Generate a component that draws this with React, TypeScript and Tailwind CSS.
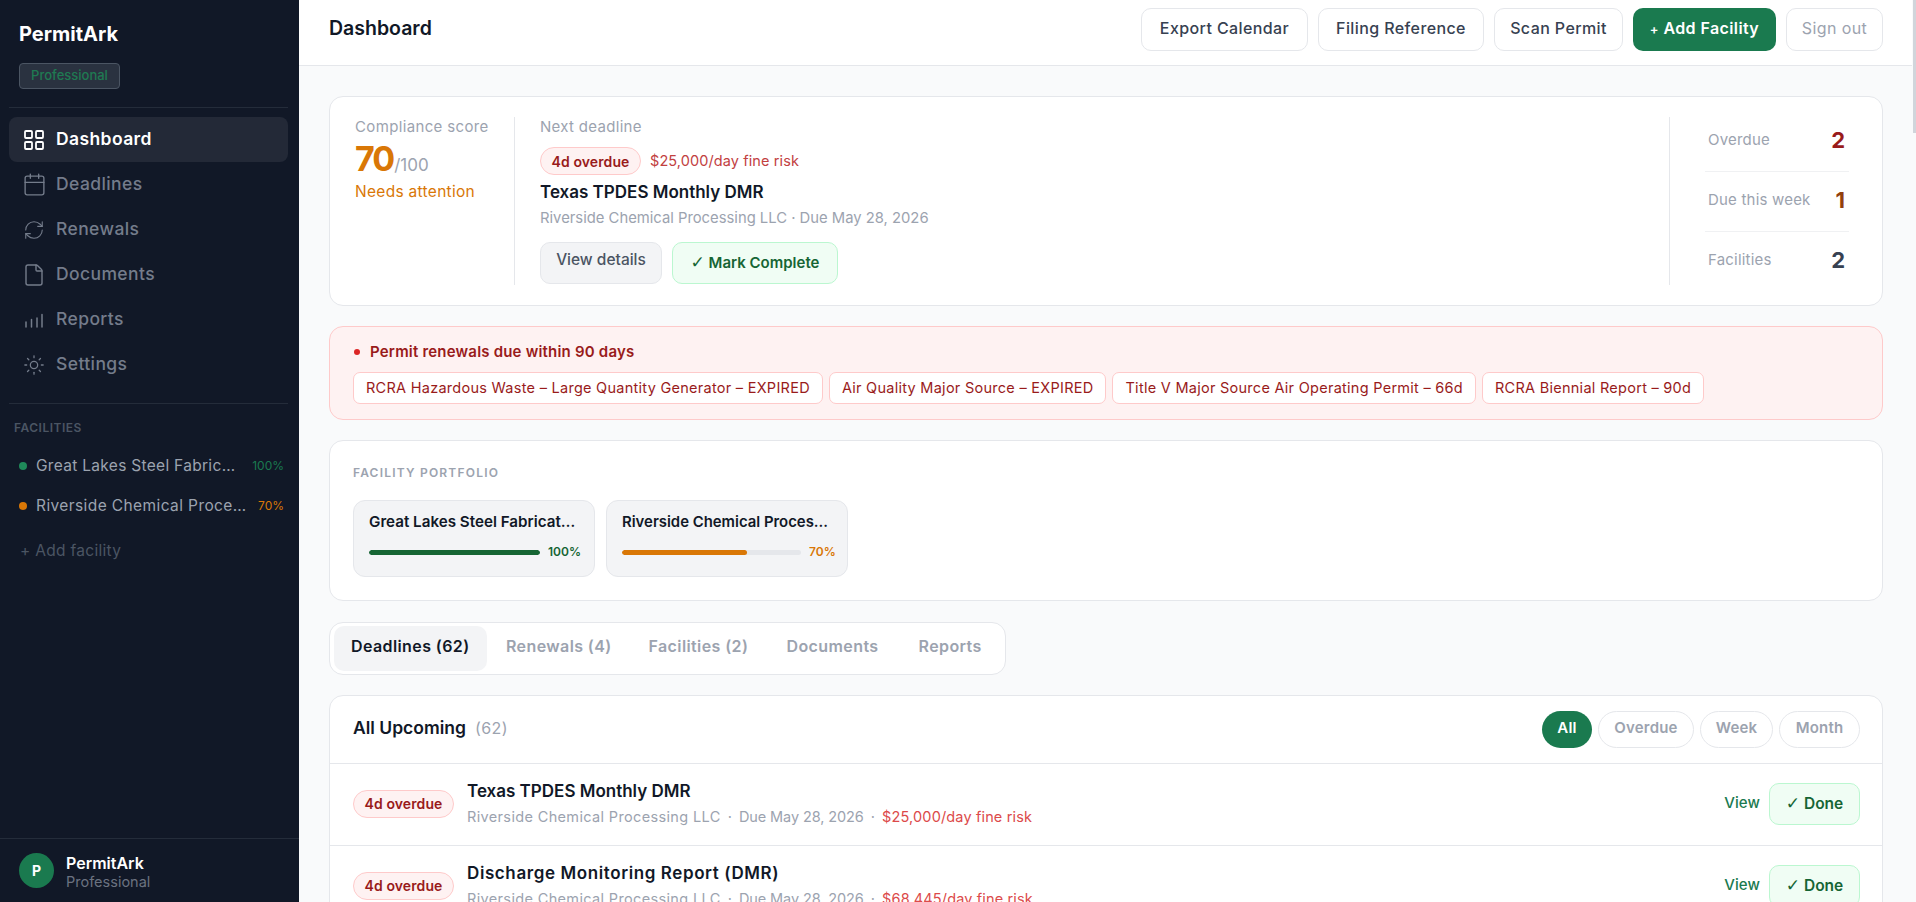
import React from 'react';
import { LayoutGrid, Calendar, RefreshCw, File, Sun } from 'lucide-react';

const font = { fontFamily: 'Inter, "Noto Sans", sans-serif' };

const ReportsIcon = () => (
  <svg width="20" height="20" viewBox="0 0 20 20" fill="none" stroke="currentColor" strokeWidth="1.5" strokeLinecap="round">
    <path d="M2 17v-5M7.5 17V9.5M13 17V8M18 17V4.5" />
  </svg>
);

const navItems = [
  { label: 'Dashboard', icon: <LayoutGrid size={24} strokeWidth={1.8} className="shrink-0" />, active: true },
  { label: 'Deadlines', icon: <Calendar size={25} strokeWidth={1.3} className="shrink-0" /> },
  { label: 'Renewals', icon: <RefreshCw size={22} strokeWidth={1.2} className="shrink-0" /> },
  { label: 'Documents', icon: <File size={24} strokeWidth={1.4} className="shrink-0" /> },
  { label: 'Reports', icon: <ReportsIcon /> },
  { label: 'Settings', icon: <Sun size={22} strokeWidth={1.4} className="shrink-0" /> },
];

const chips = [
  'RCRA Hazardous Waste – Large Quantity Generator – EXPIRED',
  'Air Quality Major Source – EXPIRED',
  'Title V Major Source Air Operating Permit – 66d',
  'RCRA Biennial Report – 90d',
];

const rows = [
  { title: 'Texas TPDES Monthly DMR', risk: '$25,000/day fine risk', titleClass: 'tracking-[0px]' },
  { title: 'Discharge Monitoring Report (DMR)', risk: '$68,445/day fine risk', titleClass: 'tracking-[0.6px]' },
];

const Check = () => <span className="font-['DejaVu_Sans'] text-[17px] font-normal leading-none">✓</span>;

const Overdue = () => (
  <span className="inline-flex h-[28px] w-[101px] shrink-0 items-center justify-center rounded-full border border-[#fecaca] bg-[#fef2f2] text-[14px] font-semibold tracking-[0.1px] text-[#991b1b]">
    4d overdue
  </span>
);

export default function App() {
  return (
    <div className="flex h-screen overflow-hidden bg-[#f9fafb]" style={font}>
      {/* Sidebar */}
      <aside className="flex w-[299px] shrink-0 flex-col bg-[#111827]">
        <div className="ml-[9px] mr-[11px] border-b border-[#242c3a] px-[10px] pb-[18px] pt-[21px]">
          <div className="text-[20px] font-bold leading-[26px] text-white">PermitArk</div>
          <span className="mt-[16px] flex h-[26px] w-[101px] items-center justify-center rounded border border-[#4b5563] bg-[#2a3240] text-[13px] font-medium text-[#1f7a52]">
            Professional
          </span>
        </div>
        <nav className="ml-[9px] mr-[11px] mt-[9px] border-b border-[#242c3a] pb-[16px]">
          {navItems.map((item) => (
            <div
              key={item.label}
              className={`flex h-[45px] items-center gap-[12px] rounded-lg px-[15px] text-[17.5px] tracking-[0.4px] ${
                item.active ? 'bg-[#232937] font-semibold text-white' : 'font-medium text-[#747c8b]'
              }`}
            >
              <span className="flex w-[20px] justify-center">{item.icon}</span>
              {item.label}
            </div>
          ))}
        </nav>
        <div className="px-[14px] pt-[16px] text-[12px] font-semibold leading-[16px] tracking-[0.5px] text-[#4b5563]">FACILITIES</div>
        <div className="mt-[10px] pl-[19px] pr-[15px]">
          <div className="flex h-[40px] items-center">
            <span className="h-[8px] w-[8px] shrink-0 rounded-full bg-[#1f8a5a]" />
            <span className="ml-[9px] w-[206px] truncate text-[15.5px] tracking-[0.3px] text-[#9ca3af]">Great Lakes Steel Fabrication</span>
            <span className="ml-auto text-[12px] text-[#1a7a4f]">100%</span>
          </div>
          <div className="flex h-[40px] items-center">
            <span className="h-[8px] w-[8px] shrink-0 rounded-full bg-[#d97706]" />
            <span className="ml-[9px] w-[214px] truncate text-[15.5px] tracking-[0.4px] text-[#9ca3af]">Riverside Chemical Processing LLC</span>
            <span className="ml-auto text-[12px] text-[#d97706]">70%</span>
          </div>
          <div className="mt-[5px] pl-[1px] text-[15.5px] leading-[40px] tracking-[0.3px] text-[#4b5563]">+ Add facility</div>
        </div>
        <div className="mt-auto flex h-[64px] items-center gap-[12px] border-t border-[#242c3a] px-[19px]">
          <span className="flex h-[35px] w-[35px] items-center justify-center rounded-full bg-[#1a7a4f] text-[14px] font-bold text-white">P</span>
          <div className="pt-[4px]">
            <div className="text-[16px] font-semibold leading-[19px] text-white">PermitArk</div>
            <div className="text-[14.5px] leading-[18px] text-[#6b7280]">Professional</div>
          </div>
        </div>
      </aside>

      {/* Main column */}
      <div className="min-w-0 flex-1 overflow-hidden">
        <header className="flex h-[66px] items-center justify-between border-b border-[#e5e7eb] bg-white pb-[6px] pl-[30px] pr-[29px]">
          <h1 className="pb-[2px] text-[19.5px] font-semibold text-[#111827]">Dashboard</h1>
          <div className="flex items-center gap-[10px] text-[16px] tracking-[0.4px]">
            <button className="h-[43px] w-[167px] rounded-[10px] border border-[#e5e7eb] bg-white pb-[3px] font-medium text-[#374151]">Export Calendar</button>
            <button className="h-[43px] w-[166px] rounded-[10px] border border-[#e5e7eb] bg-white pb-[3px] font-medium text-[#374151]">Filing Reference</button>
            <button className="h-[43px] w-[129px] rounded-[10px] border border-[#e5e7eb] bg-white pb-[3px] font-medium text-[#374151]">Scan Permit</button>
            <button className="h-[43px] w-[143px] rounded-[10px] bg-[#1a7a4f] pb-[3px] font-semibold text-white"><span className="text-[13px]">+</span> Add Facility</button>
            <button className="h-[43px] w-[97px] rounded-[10px] border border-[#e5e7eb] bg-white pb-[3px] text-[#9ca3af]">Sign out</button>
          </div>
        </header>

        <main className="flex flex-col pl-[30px] pr-[29px] pt-[30px]">
          {/* Score card */}
          <section className="flex h-[210px] rounded-[14px] border border-[#e5e7eb] bg-white px-[25px] py-[20px]">
            <div className="w-[160px] shrink-0 border-r border-[#e5e7eb]">
              <div className="text-[15px] leading-[20px] tracking-[0.35px] text-[#9ca3af]">Compliance score</div>
              <div className="mt-[1px] flex items-baseline">
                <span className="text-[34px] font-bold leading-[42px] tracking-[-2px] text-[#d97706]">70</span>
                <span className="ml-[1px] text-[17px] text-[#9ca3af]">/100</span>
              </div>
              <div className="mt-[2px] text-[15.5px] leading-[20px] tracking-[0.3px] text-[#d97706]">Needs attention</div>
            </div>
            <div className="flex-1 pl-[25px]">
              <div className="text-[15px] leading-[20px] tracking-[0.3px] text-[#9ca3af]">Next deadline</div>
              <div className="mt-[10px] flex items-center gap-[9px]">
                <Overdue />
                <span className="text-[14.5px] tracking-[0.1px] text-[#c2413f]">$25,000/day fine risk</span>
              </div>
              <div className="mt-[4px] text-[17px] font-semibold leading-[26px] text-[#111827]">Texas TPDES Monthly DMR</div>
              <div className="mt-[1px] text-[14.8px] leading-[24px] text-[#9ca3af]">Riverside Chemical Processing LLC · Due May 28, 2026</div>
              <div className="mt-[12px] flex items-start gap-[10px]">
                <button className="h-[42px] w-[122px] rounded-[10px] border border-[#e5e7eb] bg-[#f3f4f6] pb-[6px] text-[15.5px] font-medium text-[#4b5563]">View details</button>
                <button className="h-[42px] w-[166px] rounded-[10px] border border-[#bbf7d0] bg-[#f0fdf4] text-[15px] font-semibold text-[#166534]"><Check /> Mark Complete</button>
              </div>
            </div>
            <div className="w-[188px] shrink-0 border-l border-[#e5e7eb] pl-[35px] pr-[8px]">
              <div className="flex h-[55px] items-center justify-between border-b border-[#f0f1f3] pb-[8px] pl-[3px] pr-[4px]">
                <span className="text-[15px] tracking-[0.2px] text-[#9ca3af]">Overdue</span>
                <span className="text-[22px] font-bold text-[#991b1b]">2</span>
              </div>
              <div className="flex h-[60px] items-center justify-between border-b border-[#f0f1f3] pb-[2px] pl-[3px] pr-[4px]">
                <span className="text-[15px] tracking-[0.2px] text-[#9ca3af]">Due this week</span>
                <span className="text-[22px] font-bold text-[#92400e]">1</span>
              </div>
              <div className="flex h-[55px] items-center justify-between pl-[3px] pr-[4px] pt-[1px]">
                <span className="text-[15px] tracking-[0.2px] text-[#9ca3af]">Facilities</span>
                <span className="text-[22px] font-bold text-[#374151]">2</span>
              </div>
            </div>
          </section>

          {/* Renewal alert */}
          <section className="mt-[20px] h-[94px] rounded-[14px] border border-[#fecaca] bg-[#fef2f2] px-[23px] pt-[15px]">
            <div className="flex items-center gap-[10px] text-[15px] font-semibold leading-[20px] tracking-[0.2px] text-[#991b1b]">
              <span className="ml-[1px] h-[6px] w-[6px] rounded-full bg-[#dc2626]" />
              Permit renewals due within 90 days
            </div>
            <div className="mt-[10px] flex gap-[6px]">
              {chips.map((chip) => (
                <span key={chip} className="flex h-[32px] items-center whitespace-nowrap rounded-[7px] border border-[#fecaca] bg-white px-[12px] pb-[1px] text-[14.5px] tracking-[0.27px] text-[#991b1b]">
                  {chip}
                </span>
              ))}
            </div>
          </section>

          {/* Portfolio */}
          <section className="mt-[20px] h-[161px] rounded-[14px] border border-[#e5e7eb] bg-white px-[23px] pt-[23px]">
            <div className="text-[12px] font-semibold leading-[18px] tracking-[1.2px] text-[#9ca3af]">FACILITY PORTFOLIO</div>
            <div className="mt-[18px] flex gap-[11px]">
              <div className="h-[77px] w-[242px] rounded-[12px] border border-[#e5e7eb] bg-[#f3f4f6] px-[15px] pt-[11px]">
                <div className="truncate text-[15.2px] font-semibold leading-[20px] text-[#111827]">Great Lakes Steel Fabrication</div>
                <div className="mt-[11px] flex items-center gap-[8px]">
                  <div className="h-[5px] w-[171px] shrink-0 overflow-hidden rounded-full bg-[#e5e7eb]">
                    <div className="h-full w-full rounded-full bg-[#166534]" />
                  </div>
                  <span className="text-[12px] font-semibold text-[#166534]">100%</span>
                </div>
              </div>
              <div className="h-[77px] w-[242px] rounded-[12px] border border-[#e5e7eb] bg-[#f3f4f6] px-[15px] pt-[11px]">
                <div className="truncate text-[14.9px] font-semibold leading-[20px] text-[#111827]">Riverside Chemical Processing</div>
                <div className="mt-[11px] flex items-center gap-[8px]">
                  <div className="h-[5px] w-[179px] shrink-0 overflow-hidden rounded-full bg-[#e5e7eb]">
                    <div className="h-full w-[70%] rounded-full bg-[#d97706]" />
                  </div>
                  <span className="text-[12px] font-semibold text-[#d97706]">70%</span>
                </div>
              </div>
            </div>
          </section>

          {/* Tabs */}
          <div className="mt-[21px] flex h-[53px] w-[677px] items-center gap-[2px] rounded-[14px] border border-[#e5e7eb] bg-white px-[4px] text-[16px] font-semibold tracking-[0.4px] text-[#9ca3af]">
            <span className="flex h-[45px] w-[153px] items-center justify-center rounded-[10px] bg-[#f3f4f6] pb-[6px] text-[#111827]">Deadlines (62)</span>
            <span className="flex h-[45px] w-[141px] items-center justify-center pb-[6px]">Renewals (4)</span>
            <span className="flex h-[45px] w-[135px] items-center justify-center pb-[6px]">Facilities (2)</span>
            <span className="flex h-[45px] w-[130px] items-center justify-center pb-[6px]">Documents</span>
            <span className="flex h-[45px] w-[102px] items-center justify-center pb-[6px]">Reports</span>
          </div>

          {/* Deadlines list */}
          <section className="mt-[20px] rounded-t-[14px] border border-[#e5e7eb] bg-white">
            <div className="flex h-[68px] items-center justify-between border-b border-[#e5e7eb] pl-[23px] pr-[22px]">
              <div className="flex items-baseline gap-[9px] pb-[3px]">
                <span className="text-[17.5px] font-semibold text-[#111827]">All Upcoming</span>
                <span className="text-[16px] tracking-[0.4px] text-[#9ca3af]">(62)</span>
              </div>
              <div className="flex gap-[6px] text-[15px] font-semibold tracking-[0.2px]">
                <span className="flex h-[37px] w-[50px] items-center justify-center rounded-full bg-[#1a7a4f] pb-[2px] text-white">All</span>
                <span className="flex h-[37px] w-[96px] items-center justify-center rounded-full border border-[#e5e7eb] pb-[2px] text-[#9ca3af]">Overdue</span>
                <span className="flex h-[37px] w-[73px] items-center justify-center rounded-full border border-[#e5e7eb] pb-[2px] text-[#9ca3af]">Week</span>
                <span className="flex h-[37px] w-[81px] items-center justify-center rounded-full border border-[#e5e7eb] pb-[2px] text-[#9ca3af]">Month</span>
              </div>
            </div>
            {rows.map((row) => (
              <div key={row.title} className="flex h-[82px] items-center gap-[13px] border-b border-[#e5e7eb] pb-[2px] pl-[23px] pr-[22px]">
                <Overdue />
                <div className="min-w-0 flex-1 pb-[2px]">
                  <div className={`text-[17px] font-semibold leading-[26px] text-[#111827] ${row.titleClass}`}>{row.title}</div>
                  <div className="mt-[2px] text-[14.5px] leading-[22px] text-[#9ca3af]">
                    <span className="tracking-[0.35px]">Riverside Chemical Processing LLC</span> <span className="mx-[3px]">·</span> <span className="tracking-[-0.1px]">Due May 28, 2026</span> <span className="mx-[3px]">·</span>{' '}
                    <span className="tracking-[0.15px] text-[#dc4a4a]">{row.risk}</span>
                  </div>
                </div>
                <span className="text-[15px] font-medium tracking-[0.1px] text-[#1a7a4f]">View</span>
                <button className="ml-[-4px] h-[42px] w-[91px] rounded-[10px] border border-[#bbf7d0] bg-[#f0fdf4] text-[15.5px] font-semibold text-[#166534]"><Check /> Done</button>
              </div>
            ))}
          </section>
        </main>
      </div>

      {/* Page scrollbar */}
      <div className="w-[4px] shrink-0 bg-[#f9fafb]">
        <div className="ml-[1px] h-[133px] w-[3px] bg-[#d1d5db]" />
      </div>
    </div>
  );
}
